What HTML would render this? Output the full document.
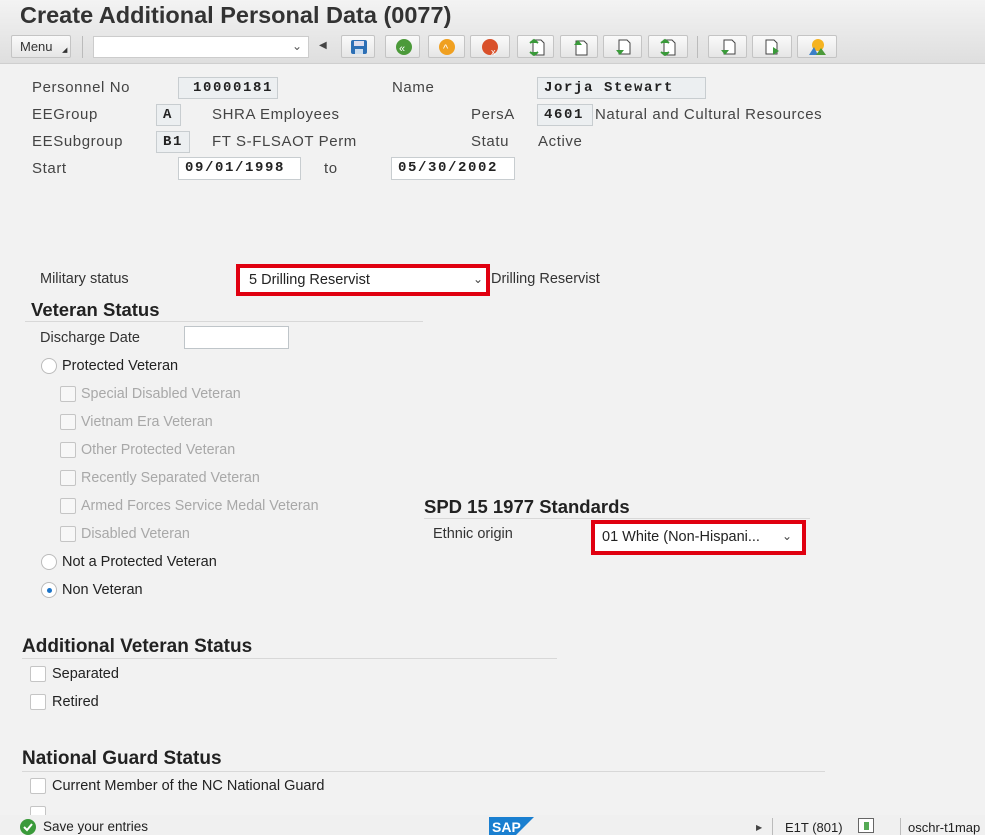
<!DOCTYPE html>
<html><head><meta charset="utf-8"><style>
*{box-sizing:border-box;margin:0;padding:0}
body{width:985px;height:835px;overflow:hidden;background:#f2f2f2;font-family:"Liberation Sans",Arial,sans-serif;color:#333;position:relative}
.a{position:absolute;white-space:nowrap}
.l{font-size:15px;letter-spacing:0.6px;color:#444}
.s{font-size:14.5px;color:#333}
.box{position:absolute;background:#eceff1;border:1px solid #c8cdd0;font-family:"Liberation Mono",monospace;font-weight:bold;font-size:14px;letter-spacing:1.6px;color:#222;padding:2px 0 0 6px}
.wbox{position:absolute;background:#fff;border:1px solid #bfc5c9}
.h{position:absolute;font-size:18.5px;font-weight:bold;color:#222}
.line{position:absolute;height:1px;background:#d8d8d8}
.cb{position:absolute;width:16px;height:16px;border:1px solid #c5c5c5;background:#f7f7f7;border-radius:2px}
.rb{position:absolute;width:16px;height:16px;border:1px solid #bbb;background:#fff;border-radius:50%}
.g{color:#a8a8a8;font-size:14.3px}
.btn{position:absolute;top:35px;height:23px;border:1px solid #c4c4c4;background:linear-gradient(#fafafa,#e6e6e6);border-radius:2px}
</style></head><body>
<div class="a" style="left:0;top:0;width:985px;height:64px;background:linear-gradient(#f3f3f3,#dedede)"></div>
<div class="a" style="left:0;top:63px;width:985px;height:1px;background:#cfcfcf"></div>
<div class="a" style="left:20px;top:2px;font-size:23.5px;font-weight:bold;color:#333">Create Additional Personal Data (0077)</div>
<div class="btn" style="left:11px;width:60px"><span class="a" style="left:8px;top:3px;font-size:13px;color:#333">Menu</span><span class="a" style="left:50px;top:10px;font-size:7px">◢</span></div>
<div class="a" style="left:82px;top:36px;width:1px;height:22px;background:#bbb"></div>
<div class="a" style="left:93px;top:36px;width:216px;height:22px;background:#fff;border:1px solid #ccc"><span class="a" style="right:6px;top:2px;font-size:12px;color:#555">⌄</span></div>
<div class="a" style="left:319px;top:40px;font-size:10px;color:#444">◀</div>
<div class="btn" style="left:341px;width:34px"><svg class="a" style="left:8px;top:3px" width="18" height="16"><rect x="1" y="1" width="16" height="14" rx="2" fill="#2c6fb5"/><rect x="4" y="2" width="10" height="5" fill="#dde"/><rect x="5" y="10" width="8" height="5" fill="#cde"/></svg></div>
<div class="btn" style="left:385px;width:35px"><svg class="a" style="left:9px;top:2px" width="18" height="18"><circle cx="9" cy="9" r="8" fill="#4c9a3a"/><text x="4" y="14" font-size="11" fill="#fff" font-family="Liberation Sans">«</text></svg></div>
<div class="btn" style="left:428px;width:37px"><svg class="a" style="left:9px;top:2px" width="18" height="18"><circle cx="9" cy="9" r="8" fill="#f0a020"/><text x="5" y="14" font-size="11" fill="#fff" font-family="Liberation Sans">^</text></svg></div>
<div class="btn" style="left:470px;width:40px"><svg class="a" style="left:10px;top:2px" width="20" height="18"><circle cx="9" cy="9" r="8" fill="#d9502a"/><text x="10" y="17" font-size="9" fill="#fff" font-family="Liberation Sans">x</text></svg></div>
<div class="btn" style="left:517px;width:37px"><svg class="a" style="left:10px;top:2px" width="18" height="18"><path d="M5 2h8l3 3v12H5z" fill="#fff" stroke="#444"/><path d="M2 5l4-3 4 3M2 14l4 3 4-3" fill="#3a9a3a" stroke="#3a9a3a" stroke-width="2"/></svg></div>
<div class="btn" style="left:560px;width:38px"><svg class="a" style="left:10px;top:2px" width="18" height="18"><path d="M5 3h8l3 3v11H5z" fill="#fff" stroke="#444"/><path d="M3 7l4-5 4 5" fill="#3a9a3a"/></svg></div>
<div class="btn" style="left:603px;width:39px"><svg class="a" style="left:10px;top:2px" width="18" height="18"><path d="M5 2h8l3 3v11H5z" fill="#fff" stroke="#444"/><path d="M2 12l4 5 4-5" fill="#3a9a3a"/></svg></div>
<div class="btn" style="left:648px;width:40px"><svg class="a" style="left:10px;top:2px" width="18" height="18"><path d="M5 2h8l3 3v12H5z" fill="#fff" stroke="#444"/><path d="M2 5l4-3 4 3M2 14l4 3 4-3" fill="#3a9a3a" stroke="#3a9a3a" stroke-width="2"/></svg></div>
<div class="a" style="left:697px;top:36px;width:1px;height:22px;background:#bbb"></div>
<div class="btn" style="left:708px;width:39px"><svg class="a" style="left:10px;top:2px" width="18" height="18"><path d="M5 2h8l3 3v11H5z" fill="#fff" stroke="#444"/><path d="M2 12l4 5 4-5" fill="#3a9a3a"/></svg></div>
<div class="btn" style="left:752px;width:40px"><svg class="a" style="left:10px;top:2px" width="20" height="18"><path d="M3 2h8l3 3v11H3z" fill="#fff" stroke="#444"/><path d="M10 9l6 4-6 4z" fill="#3a9a3a"/></svg></div>
<div class="btn" style="left:797px;width:40px"><svg class="a" style="left:9px;top:2px" width="22" height="18"><circle cx="11" cy="7" r="6" fill="#f5b321"/><path d="M2 17l5-8 4 8z" fill="#3a7fc8"/><path d="M9 17l5-7 5 7z" fill="#4c9a3a"/></svg></div>

<div class="a l" style="left:32px;top:79px">Personnel No</div>
<div class="box" style="left:178px;top:77px;width:100px;height:22px;padding-left:14px">10000181</div>
<div class="a l" style="left:392px;top:79px">Name</div>
<div class="box" style="left:537px;top:77px;width:169px;height:22px">Jorja Stewart</div>
<div class="a l" style="left:32px;top:106px">EEGroup</div>
<div class="box" style="left:156px;top:104px;width:25px;height:22px">A</div>
<div class="a l" style="left:212px;top:106px">SHRA Employees</div>
<div class="a l" style="left:471px;top:106px">PersA</div>
<div class="box" style="left:537px;top:104px;width:56px;height:22px">4601</div>
<div class="a l" style="left:595px;top:106px">Natural and Cultural Resources</div>
<div class="a l" style="left:32px;top:133px">EESubgroup</div>
<div class="box" style="left:156px;top:131px;width:34px;height:22px">B1</div>
<div class="a l" style="left:212px;top:133px">FT S-FLSAOT Perm</div>
<div class="a l" style="left:471px;top:133px">Statu</div>
<div class="a l" style="left:538px;top:133px">Active</div>
<div class="a l" style="left:32px;top:160px">Start</div>
<div class="box" style="left:178px;top:157px;width:123px;height:23px;background:#fff">09/01/1998</div>
<div class="a l" style="left:324px;top:160px">to</div>
<div class="box" style="left:391px;top:157px;width:124px;height:23px;background:#fff">05/30/2002</div>

<div class="a s" style="left:40px;top:271px">Military status</div>
<div class="a" style="left:236px;top:264px;width:254px;height:32px;border:4px solid #e00010;background:#fff"><span class="a s" style="left:9px;top:4px;color:#222">5 Drilling Reservist</span><span class="a" style="right:3px;top:4px;font-size:12px;color:#444">⌄</span></div>
<div class="a s" style="left:491px;top:271px">Drilling Reservist</div>
<div class="h" style="left:31px;top:299px">Veteran Status</div>
<div class="line" style="left:25px;top:321px;width:398px"></div>
<div class="a s" style="left:40px;top:330px">Discharge Date</div>
<div class="wbox" style="left:184px;top:326px;width:105px;height:23px"></div>
<div class="rb" style="left:41px;top:358px"></div><div class="a s" style="left:62px;top:358px;color:#222">Protected Veteran</div>
<div class="cb" style="left:60px;top:386px"></div><div class="a g" style="left:81px;top:386px">Special Disabled Veteran</div>
<div class="cb" style="left:60px;top:414px"></div><div class="a g" style="left:81px;top:414px">Vietnam Era Veteran</div>
<div class="cb" style="left:60px;top:442px"></div><div class="a g" style="left:81px;top:442px">Other Protected Veteran</div>
<div class="cb" style="left:60px;top:470px"></div><div class="a g" style="left:81px;top:470px">Recently Separated Veteran</div>
<div class="cb" style="left:60px;top:498px"></div><div class="a g" style="left:81px;top:498px">Armed Forces Service Medal Veteran</div>
<div class="cb" style="left:60px;top:526px"></div><div class="a g" style="left:81px;top:526px">Disabled Veteran</div>
<div class="rb" style="left:41px;top:554px"></div><div class="a s" style="left:62px;top:554px;color:#222">Not a Protected Veteran</div>
<div class="rb" style="left:41px;top:582px"><div class="a" style="left:5px;top:5px;width:5px;height:5px;border-radius:50%;background:#1a73c8"></div></div><div class="a s" style="left:62px;top:582px;color:#222">Non Veteran</div>

<div class="h" style="left:424px;top:496px">SPD 15 1977 Standards</div>
<div class="line" style="left:424px;top:518px;width:386px"></div>
<div class="a s" style="left:433px;top:526px">Ethnic origin</div>
<div class="a" style="left:591px;top:520px;width:215px;height:35px;border:4px solid #e00010;background:#fff"><span class="a s" style="left:7px;top:5px;color:#222">01 White (Non-Hispani...</span><span class="a" style="right:10px;top:5px;font-size:12px;color:#444">⌄</span></div>

<div class="h" style="left:22px;top:636px;font-size:19px">Additional Veteran Status</div>
<div class="line" style="left:22px;top:658px;width:535px"></div>
<div class="cb" style="left:30px;top:666px;background:#fff"></div><div class="a s" style="left:52px;top:666px;color:#222">Separated</div>
<div class="cb" style="left:30px;top:694px;background:#fff"></div><div class="a s" style="left:52px;top:694px;color:#222">Retired</div>

<div class="h" style="left:22px;top:748px;font-size:19px">National Guard Status</div>
<div class="line" style="left:22px;top:771px;width:803px"></div>
<div class="cb" style="left:30px;top:778px;background:#fff"></div><div class="a s" style="left:52px;top:778px;color:#222">Current Member of the NC National Guard</div>
<div class="cb" style="left:30px;top:806px;background:#fff"></div>

<div class="a" style="left:0;top:815px;width:985px;height:20px;background:#f0f0f0"></div>
<svg class="a" style="left:19px;top:818px" width="18" height="17"><circle cx="9" cy="9" r="8" fill="#3a9a3a"/><path d="M5 9l3 3 5-6" stroke="#fff" stroke-width="2" fill="none"/></svg>
<div class="a s" style="left:43px;top:819px;color:#222;font-size:13.5px">Save your entries</div>
<svg class="a" style="left:489px;top:817px" width="45" height="18"><path d="M0 0h45l-18 18H0z" fill="#1a7fd0"/><text x="3" y="15" font-size="14" font-weight="bold" fill="#fff" font-family="Liberation Sans">SAP</text></svg>
<div class="a" style="left:756px;top:823px;font-size:8px;color:#444">▶</div>
<div class="a" style="left:772px;top:818px;width:1px;height:17px;background:#bbb"></div>
<div class="a s" style="left:785px;top:820px;color:#222;font-size:13px">E1T (801)</div>
<div class="a" style="left:858px;top:818px;width:16px;height:15px;border:1px solid #666;background:#fff"><div class="a" style="left:5px;top:3px;width:5px;height:8px;background:#5a5"></div></div>
<div class="a" style="left:900px;top:818px;width:1px;height:17px;background:#bbb"></div>
<div class="a s" style="left:908px;top:820px;color:#222;font-size:13px">oschr-t1map</div>
</body></html>
